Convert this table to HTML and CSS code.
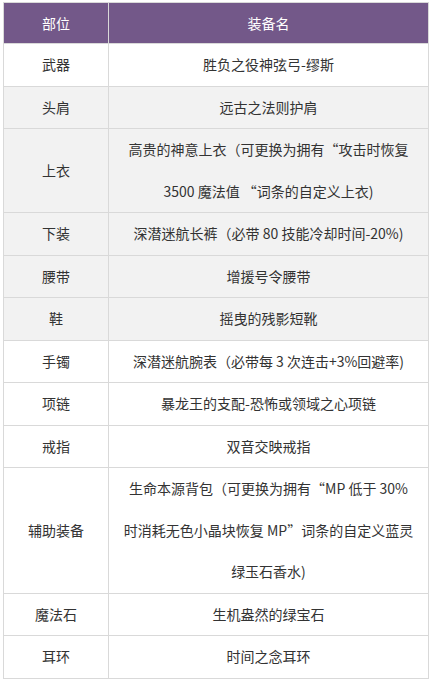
FILE: index.html
```html
<!DOCTYPE html>
<html lang="zh-CN">
<head>
<meta charset="utf-8">
<title>装备</title>
<link rel="stylesheet" href="styles.css">
</head>
<body>
<table class="gear">
  <colgroup><col class="c-slot"><col class="c-name"></colgroup>
  <thead>
    <tr><th>部位</th><th>装备名</th></tr>
  </thead>
  <tbody>
    <tr><td>武器</td><td>胜负之役神弦弓-缪斯</td></tr>
    <tr class="alt"><td>头肩</td><td>远古之法则护肩</td></tr>
    <tr class="alt"><td>上衣</td><td>高贵的神意上衣（可更换为拥有“攻击时恢复<br>3500 魔法值 “词条的自定义上衣)</td></tr>
    <tr class="alt"><td>下装</td><td>深潜迷航长裤（必带 80 技能冷却时间-20%)</td></tr>
    <tr class="alt"><td>腰带</td><td>增援号令腰带</td></tr>
    <tr class="alt"><td>鞋</td><td>摇曳的残影短靴</td></tr>
    <tr><td>手镯</td><td>深潜迷航腕表（必带每 3 次连击+3%回避率)</td></tr>
    <tr><td>项链</td><td>暴龙王的支配-恐怖或领域之心项链</td></tr>
    <tr><td>戒指</td><td>双音交映戒指</td></tr>
    <tr><td>辅助装备</td><td>生命本源背包（可更换为拥有“MP 低于 30%<br>时消耗无色小晶块恢复 MP”词条的自定义蓝灵<br>绿玉石香水)</td></tr>
    <tr><td>魔法石</td><td>生机盎然的绿宝石</td></tr>
    <tr><td>耳环</td><td>时间之念耳环</td></tr>
  </tbody>
</table>
</body>
</html>
```
FILE: styles.css
```css
html, body {
  margin: 0;
  padding: 0;
  background: #ffffff;
}
body {
  padding: 2px 4px 0 3px;
  font-family: "Noto Sans CJK SC", "Noto Sans", sans-serif;
  font-size: 14px;
  color: #333333;
}
.gear {
  width: 426px;
  border-collapse: collapse;
  table-layout: fixed;
}
.c-slot { width: 105px; }
.gear th,
.gear td {
  border: 1px solid #d9d9d9;
  text-align: center;
  vertical-align: middle;
  padding: 0 6px;
  line-height: 41.5px;
  font-weight: normal;
}
.gear th {
  background: #735889;
  color: #ffffff;
  line-height: 40px;
}
.gear tr.alt td {
  background: #f2f2f2;
}
```
